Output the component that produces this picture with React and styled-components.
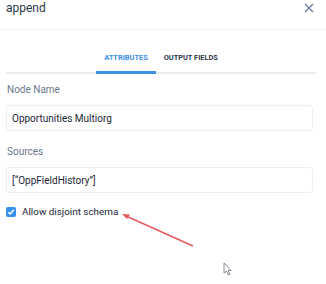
import React from 'react';
import styled, { createGlobalStyle } from 'styled-components';

const Global = createGlobalStyle`
  html, body {
    margin: 0;
    padding: 0;
    background: #ffffff;
  }
  body {
    font-family: Roboto, "Open Sans", sans-serif;
    color: #16325c;
  }
`;

const Panel = styled.div`
  position: relative;
  width: 326px;
  height: 284px;
  overflow: hidden;
  background: #fff;
`;

const Header = styled.div`
  display: flex;
  justify-content: space-between;
  align-items: flex-start;
  height: 28px;
  padding: 1px 12px 0 6px;
  border-bottom: 1px solid #f1f2f4;
`;

const Title = styled.div`
  font-size: 12px;
  line-height: 14px;
  color: #2b3648;
`;

const Close = styled.button`
  border: none;
  background: none;
  padding: 0;
  margin-top: 2px;
  width: 10px;
  height: 10px;
  display: flex;
  color: #6b82a8;
`;

const TabBar = styled.div`
  display: flex;
  justify-content: center;
  align-items: flex-end;
  height: 42px;
  margin: 0 10px 0 6px;
  border-bottom: 2px solid #e9ecf0;
`;

const Tab = styled.div`
  padding: 0 8px 8px;
  margin-bottom: -2px;
  font-size: 7.4px;
  line-height: 10px;
  font-weight: 700;
  color: ${p => (p.active ? '#3d8fe8' : '#2b3648')};
  border-bottom: 3px solid ${p => (p.active ? '#3d8fe8' : 'transparent')};
`;

const Form = styled.div`
  display: flex;
  flex-direction: column;
  width: 307px;
  margin: 9px 0 0 6px;
`;

const Label = styled.div`
  font-size: 10px;
  line-height: 14px;
  color: #6b7888;
  padding-left: 1px;
  margin-bottom: 8px;
`;

const Input = styled.div`
  height: 26px;
  box-sizing: border-box;
  border: 1px solid #eceef1;
  border-radius: 3px;
  display: flex;
  align-items: center;
  padding: 0 5px;
  font-size: 10px;
  color: #1c2536;
  margin-bottom: ${p => p.gap || 0}px;
`;

const CheckRow = styled.label`
  display: flex;
  align-items: center;
  gap: 6px;
  margin-top: 13px;
  font-size: 9.9px;
  color: #1c2536;
`;

const Box = styled.span`
  width: 10px;
  height: 10px;
  border-radius: 2px;
  background: #3790ea;
  display: flex;
  align-items: center;
  justify-content: center;
`;

const Overlay = styled.svg`
  position: absolute;
  left: 0;
  top: 0;
  pointer-events: none;
`;

export default function App() {
  return (
    <Panel>
      <Global />
      <Header>
        <Title>append</Title>
        <Close aria-label="close">
          <svg width="10" height="10" viewBox="0 0 10 10">
            <path d="M1 1 L9 9 M9 1 L1 9" stroke="currentColor" strokeWidth="1.4" />
          </svg>
        </Close>
      </Header>
      <TabBar>
        <Tab active>ATTRIBUTES</Tab>
        <Tab>OUTPUT FIELDS</Tab>
      </TabBar>
      <Form>
        <Label>Node Name</Label>
        <Input gap={14}>Opportunities Multiorg</Input>
        <Label>Sources</Label>
        <Input>[“OppFieldHistory”]</Input>
        <CheckRow>
          <Box>
            <svg width="8" height="8" viewBox="0 0 8 8">
              <path d="M1.3 4.2 L3.2 6 L6.8 1.8" stroke="#fff" strokeWidth="1.5" fill="none" />
            </svg>
          </Box>
          Allow disjoint schema
        </CheckRow>
      </Form>
      <Overlay width="326" height="284">
        <line x1="193" y1="246" x2="126" y2="216" stroke="#e45b5b" strokeWidth="1.5" />
        <path d="M122 214 L130 214.5 L127 219 Z" fill="#e45b5b" />
        <path d="M224 263 L224 273 L226.5 271 L228.5 275 L230 274.3 L228 270.5 L231 270.5 Z" fill="#fff" stroke="#6a6f7a" strokeWidth="0.8" />
      </Overlay>
    </Panel>
  );
}
